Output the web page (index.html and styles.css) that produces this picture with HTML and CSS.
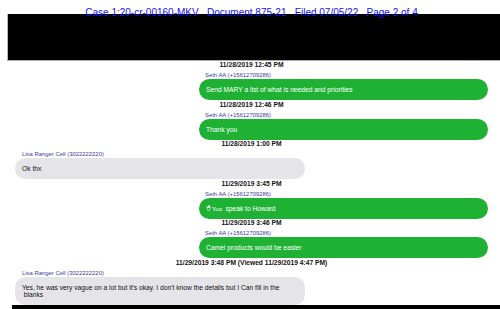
FILE: index.html
```html
<!DOCTYPE html>
<html>
<head>
<meta charset="utf-8">
<link rel="stylesheet" href="styles.css">
</head>
<body>
<div class="page">
  <div class="case-header">Case 1:20-cr-00160-MKV   Document 875-21   Filed 07/05/22   Page 2 of 4</div>
  <div class="redact redact-top"></div>
  <div class="chat">
    <div class="group out">
      <div class="ts">11/28/2019 12:45 PM</div>
      <div class="sender">Seth AA (+15612709286)</div>
      <div class="bubble">Send MARY a list of what is needed and priorities</div>
    </div>
    <div class="group out">
      <div class="ts">11/28/2019 12:46 PM</div>
      <div class="sender">Seth AA (+15612709286)</div>
      <div class="bubble">Thank you</div>
    </div>
    <div class="group in">
      <div class="ts">11/28/2019 1:00 PM</div>
      <div class="sender">Lisa Ranger Cell (3022222220)</div>
      <div class="bubble">Ok thx</div>
    </div>
    <div class="group out">
      <div class="ts">11/29/2019 3:45 PM</div>
      <div class="sender">Seth AA (+15612709286)</div>
      <div class="bubble"><svg class="hand" viewBox="0 0 10 10" width="6" height="6"><path d="M3 9 L2 5.5 L1.2 4.2 Q1.2 3.5 2 3.8 L3 5 L3 1.6 Q3.5 1 4 1.6 L4 4.5 L4 1 Q4.5 0.4 5 1 L5 4.5 L5 1.4 Q5.5 0.8 6 1.4 L6 4.8 L6 2.4 Q6.5 1.9 7 2.4 L7 6.5 Q7 9 5 9 Z" fill="none" stroke="#fff" stroke-width="0.9"/></svg><span class="you">You</span> speak to Howard</div>
    </div>
    <div class="group out">
      <div class="ts">11/29/2019 3:46 PM</div>
      <div class="sender">Seth AA (+15612709286)</div>
      <div class="bubble">Camel products would be easier</div>
    </div>
    <div class="group in">
      <div class="ts">11/29/2019 3:48 PM (Viewed 11/29/2019 4:47 PM)</div>
      <div class="sender">Lisa Ranger Cell (3022222220)</div>
      <div class="bubble">Yes, he was very vague on a lot but it's okay. I don't know the details but I Can fill in the<br>&nbsp;blanks</div>
    </div>
  </div>
  <div class="redact redact-bottom"></div>
</div>
</body>
</html>
```
FILE: styles.css
```css
html, body {
  margin: 0;
  padding: 0;
  background: #fff;
}
body {
  width: 500px;
  height: 309px;
  overflow: hidden;
  font-family: "Liberation Sans", Arial, sans-serif;
}
.page {
  display: flex;
  flex-direction: column;
}
.case-header {
  position: relative;
  z-index: 2;
  height: 14px;
  box-sizing: border-box;
  padding-top: 7px;
  font-size: 10px;
  line-height: 11px;
  color: #1414f5;
  text-align: center;
  white-space: pre;
  padding-left: 3px;
}
.redact {
  background: #000;
}
.redact-top {
  margin-left: 7px;
  height: 46px;
  border-left: 1px solid #b8b8b8;
  border-bottom: 1px solid #a8a8a8;
}
.chat {
  margin: 0 12px 0 15px;
  display: flex;
  flex-direction: column;
}
.group {
  display: flex;
  flex-direction: column;
  margin-bottom: 0.6px;
}
.ts {
  height: 8px;
  line-height: 8px;
  font-size: 6.7px;
  font-weight: bold;
  text-align: center;
  color: #111;
  margin-bottom: 2px;
  white-space: nowrap;
}
.sender {
  height: 8px;
  line-height: 8px;
  font-size: 5.9px;
  color: #3b3b9e;
  white-space: nowrap;
}
.bubble {
  box-sizing: border-box;
  width: 290px;
  min-height: 21px;
  padding: 7px 7px;
  line-height: 7px;
  font-size: 6.7px;
  border-radius: 10.5px;
  white-space: nowrap;
}
.out .sender {
  margin-left: 190px;
}
.out .bubble {
  align-self: flex-end;
  width: 289px;
  background: #1eb134;
  color: #fff;
}
.in .sender {
  margin-left: 7px;
}
.in .bubble {
  align-self: flex-start;
  background: #e4e4e9;
  color: #111;
}
.hand {
  vertical-align: -0.5px;
}
.you {
  font-family: "Liberation Serif", "Times New Roman", serif;
  font-size: 6.2px;
  margin-right: 1.5px;
}
.redact-bottom {
  position: relative;
  z-index: 2;
  margin-top: -1px;
  margin-left: 12px;
  height: 8px;
}
```
